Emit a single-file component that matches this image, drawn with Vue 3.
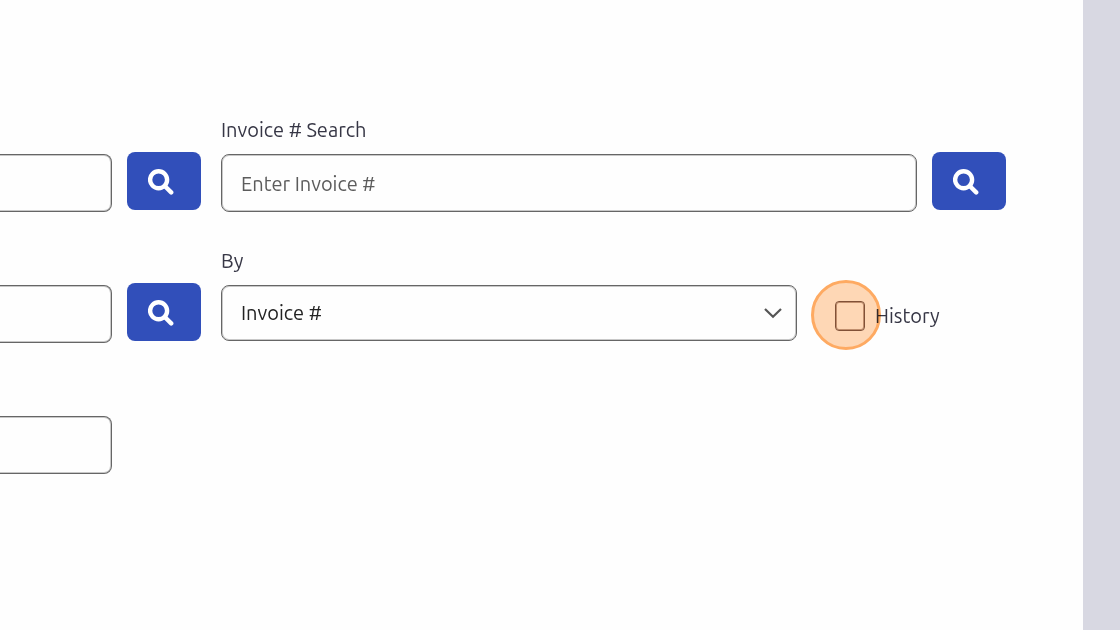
<script setup>
import { ref } from 'vue'

const leftRows = ref([
  { name: 'First search', value: '', search: true },
  { name: 'Second search', value: '', search: true },
  { name: 'Third search', value: '', search: false },
])
const invoice = ref('')
const by = ref('invoice')
const history = ref(false)
</script>

<template>
  <div class="page">
    <main class="content">
      <section class="column left">
        <div v-for="row in leftRows" :key="row.name" class="field">
          <div class="controls">
            <input v-model="row.value" class="box cut" type="text" :aria-label="row.name" />
            <button v-if="row.search" class="search" type="button" aria-label="Search">
              <svg viewBox="0 0 26 26" aria-hidden="true">
                <circle cx="10.6" cy="10.8" r="8.5" />
                <path d="M17 17.2L23.2 23.4" />
              </svg>
            </button>
            <span v-else class="blank"></span>
          </div>
        </div>
      </section>

      <section class="column right">
        <div class="field">
          <label class="caption" for="invoice">Invoice # Search</label>
          <div class="controls">
            <input id="invoice" v-model="invoice" class="box" type="text" placeholder="Enter Invoice #" />
            <button class="search" type="button" aria-label="Search invoice">
              <svg viewBox="0 0 26 26" aria-hidden="true">
                <circle cx="10.6" cy="10.8" r="8.5" />
                <path d="M17 17.2L23.2 23.4" />
              </svg>
            </button>
          </div>
        </div>

        <div class="field">
          <label class="caption" for="by">By</label>
          <div class="controls by">
            <div class="picker">
              <select id="by" v-model="by" class="box">
                <option value="invoice">Invoice #</option>
              </select>
              <svg class="chevron" viewBox="0 0 20 12" aria-hidden="true">
                <path d="M2 2L10 9.8L18 2" />
              </svg>
            </div>
            <div class="history">
              <input id="history" v-model="history" type="checkbox" />
              <label for="history">History</label>
              <span class="halo"></span>
            </div>
          </div>
        </div>
      </section>
    </main>
    <aside class="edge"></aside>
  </div>
</template>

<style>
body {
  margin: 0;
}
</style>

<style scoped>
.page {
  display: flex;
  min-height: 100vh;
  background: #fefefe;
  color: #363645;
  font-family: Ubuntu, "Noto Sans", sans-serif;
  font-size: 20px;
  line-height: 24px;
}

.content {
  flex: 1;
  display: grid;
  grid-template-columns: 201px 1fr;
  column-gap: 20px;
  align-items: start;
  padding: 118px 77px 0 0;
}

.edge {
  width: 37px;
  background: #d8d8e2;
}

.column {
  display: grid;
  row-gap: 37px;
}

.field {
  display: flex;
  flex-direction: column;
  justify-content: flex-end;
  gap: 10px;
  height: 94px;
}

.controls {
  display: flex;
  align-items: flex-end;
  gap: 15px;
  height: 60px;
}

.box {
  box-sizing: border-box;
  flex: 1;
  min-width: 0;
  width: 100%;
  height: 58px;
  margin: 0;
  padding: 0 19px;
  border: 1px solid #666;
  border-radius: 8px;
  box-shadow: inset 0 0 0 1px #c8c8c8;
  background: #fefefe;
  color: #222;
  font: inherit;
}

.box::placeholder {
  color: #5c5c5c;
  opacity: 1;
}

.cut {
  border-left: 0;
  border-radius: 0 8px 8px 0;
  box-shadow: inset -1px 0 0 #c8c8c8, inset 0 1px 0 #c8c8c8, inset 0 -1px 0 #c8c8c8;
}

.search {
  align-self: flex-start;
  display: flex;
  align-items: center;
  width: 74px;
  height: 58px;
  padding: 2px 0 0 21px;
  border: 0;
  border-radius: 8px;
  background: #314fba;
}

.search svg {
  width: 26px;
  height: 26px;
  fill: none;
  stroke: #fff;
  stroke-width: 4.4;
  stroke-linecap: round;
}

.blank {
  width: 74px;
}

.by {
  align-items: center;
  gap: 38px;
}

.picker {
  position: relative;
  flex: 1;
}

.picker .box {
  display: block;
  height: 56px;
  appearance: none;
}

.chevron {
  position: absolute;
  top: 22px;
  right: 14px;
  width: 20px;
  height: 12px;
  fill: none;
  stroke: #555;
  stroke-width: 2.2;
  pointer-events: none;
}

.history {
  position: relative;
  display: flex;
  align-items: center;
  gap: 10px;
  width: 171px;
  padding-top: 6px;
}

.history input {
  box-sizing: border-box;
  width: 30px;
  height: 30px;
  margin: 0;
  border: 1px solid #80604c;
  border-radius: 4px;
  box-shadow: inset 0 0 0 1px #c0a898;
  background: #fefefe;
  appearance: none;
}

.history input:checked {
  background: #314fba;
}

.halo {
  position: absolute;
  top: -15px;
  left: -24px;
  box-sizing: border-box;
  width: 70px;
  height: 70px;
  border: 3px solid #ffab62;
  border-radius: 50%;
  background: #ffd8b6;
  mix-blend-mode: multiply;
  pointer-events: none;
}
</style>
